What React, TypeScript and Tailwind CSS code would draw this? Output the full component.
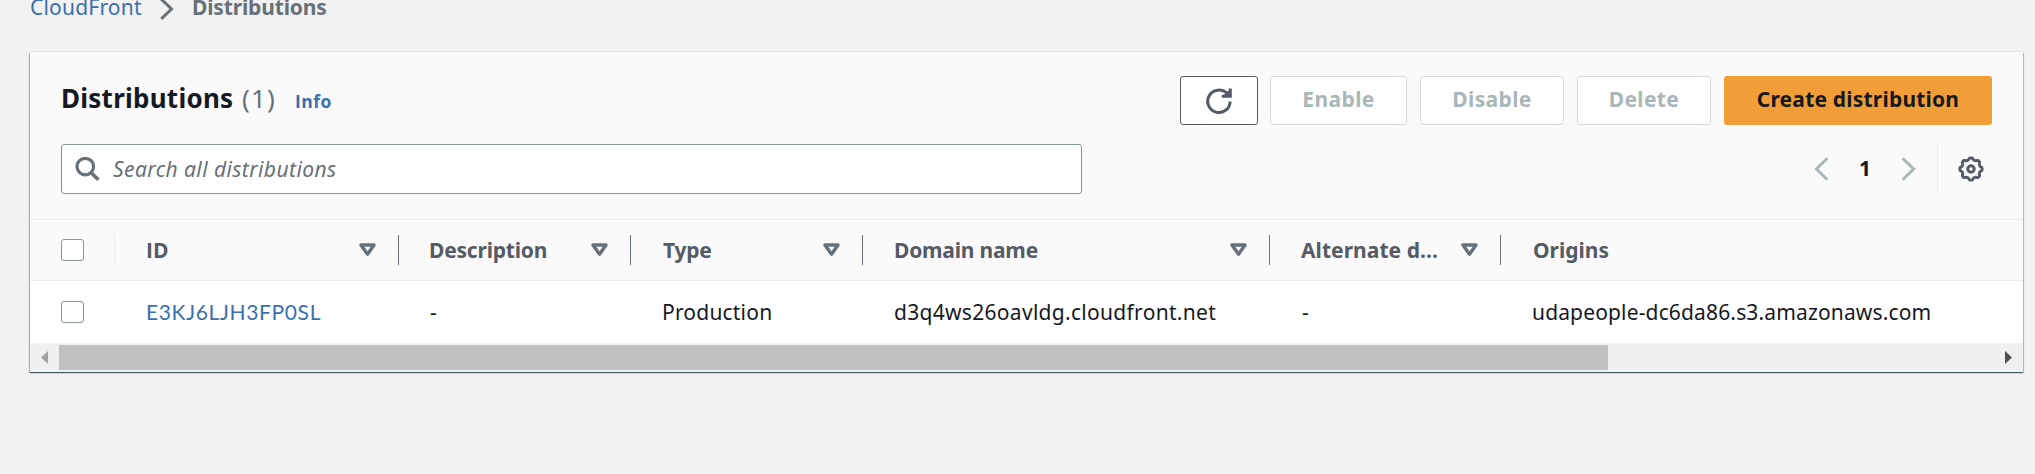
import type { ReactNode } from "react";

const gearPoints = Array.from({ length: 96 }, (_, i) => {
  const angle = (i / 96) * Math.PI * 2;
  const radius = 10.2 + 0.95 * Math.tanh(2 * Math.cos(angle * 8));
  return `${(13 + radius * Math.sin(angle)).toFixed(2)},${(13 - radius * Math.cos(angle)).toFixed(2)}`;
}).join(" ");

function SortIcon() {
  return (
    <svg width="17" height="14" viewBox="0 0 17 14" className="shrink-0">
      <path d="M2 2H15L8.5 11.2Z" fill="none" stroke="#687078" strokeWidth="3.4" strokeLinejoin="round" />
    </svg>
  );
}

function Checkbox() {
  return <span className="block h-[22px] w-[23px] rounded-[3px] border border-[#879596] bg-white" />;
}

function HeaderCell({ width, children }: { width: string; children: ReactNode }) {
  return (
    <div className={`flex h-[30px] shrink-0 items-center justify-between border-r border-[#687078] pr-[22px] ${width}`}>
      {children}
      <SortIcon />
    </div>
  );
}

function DisabledButton({ width, children }: { width: string; children: ReactNode }) {
  return (
    <button className={`flex h-[49px] items-center justify-center rounded-[3px] border border-[#d5dbdb] bg-white pb-[3px] text-[21px] font-bold text-[#aab7b8] ${width}`}>
      {children}
    </button>
  );
}

export default function App() {
  return (
    <div className="h-[474px] w-[2035px] overflow-hidden bg-[#f2f2f2] font-['Noto_Sans',sans-serif] text-[21px] leading-[30px] text-[#16191f]">
      <nav className="-mt-[8px] flex h-[60px] items-start pl-[30px]">
        <a className="w-[130px] tracking-[0.2px] text-[#3a6fb0]">CloudFront</a>
        <svg width="14" height="22" viewBox="0 0 14 22" className="mt-[6px] w-[14px] shrink-0">
          <path d="M1.3 1.2L11.5 11L1.3 20.8" fill="none" stroke="#687078" strokeWidth="3" />
        </svg>
        <span className="ml-[18px] font-bold tracking-[-0.15px] text-[#687078]">Distributions</span>
      </nav>

      <main className="ml-[30px] w-[1993px] bg-white shadow-[0_1px_1px_0_rgba(0,28,36,0.5),1px_1px_1px_0_rgba(0,28,36,0.2),-1px_1px_1px_0_rgba(0,28,36,0.25),0_-1px_0_0_#e6e8e8]">
        <section className="h-[167px] bg-[#fafafa] pt-[24px] pr-[31px] pl-[31px]">
          <div className="flex h-[49px] items-start">
            <h1 className="flex items-baseline pt-[7px]">
              <span className="w-[181px] text-[26px] font-bold tracking-[0.25px]">Distributions</span>
              <span className="w-[53px] text-[26px] tracking-[1.2px] text-[#687078]">(1)</span>
              <a className="font-['Open_Sans',sans-serif] text-[17.5px] font-bold tracking-[0.5px] text-[#3a6fb0]">Info</a>
            </h1>
            <div className="ml-auto flex">
              <button className="flex h-[49px] w-[78px] items-center justify-center rounded-[3px] border border-[#545b64] bg-white">
                <svg width="28" height="28" viewBox="0 0 28 28">
                  <path d="M25.1 14.4A11.2 11.2 0 1 1 22.2 6.8L24 8.8" fill="none" stroke="#545b64" strokeWidth="3" />
                  <path d="M25.3 1.5V9.2H16.8" fill="none" stroke="#545b64" strokeWidth="3" />
                  <path d="M20.5 5.2L25.5 3V9.5H19Z" fill="#545b64" />
                </svg>
              </button>
              <div className="ml-[12px]"><DisabledButton width="w-[137px] tracking-[0.4px]">Enable</DisabledButton></div>
              <div className="ml-[13px]"><DisabledButton width="w-[144px] tracking-[0.35px]">Disable</DisabledButton></div>
              <div className="ml-[13px]"><DisabledButton width="w-[134px] tracking-[0.35px]">Delete</DisabledButton></div>
              <button className="ml-[13px] flex h-[49px] w-[268px] items-center justify-center rounded-[3px] bg-[#f19e38] pb-[3px] text-[21px] font-bold tracking-[0.2px]">
                Create distribution
              </button>
            </div>
          </div>

          <div className="mt-[19px] flex h-[50px] items-start justify-between">
            <div className="flex h-[50px] w-[1021px] items-center rounded-[3px] border border-[#879596] bg-white pl-[13px]">
              <svg width="26" height="26" viewBox="0 0 26 26">
                <circle cx="10.3" cy="10.6" r="8.3" fill="none" stroke="#687078" strokeWidth="3.2" />
                <path d="M16 16.4L23.4 23.8" stroke="#687078" strokeWidth="3.6" />
              </svg>
              <span className="ml-[12px] tracking-[0.42px] text-[#687078] italic">Search all distributions</span>
            </div>
            <div className="flex h-[49px] items-center">
              <svg width="15" height="24" viewBox="0 0 15 24">
                <path d="M13.4 1.2L2.4 12L13.4 22.8" fill="none" stroke="#aab7b8" strokeWidth="3" />
              </svg>
              <span className="ml-[29px] w-[14px] pb-[2px] text-center font-bold">1</span>
              <svg width="15" height="24" viewBox="0 0 15 24" className="ml-[29px]">
                <path d="M1.6 1.2L12.6 12L1.6 22.8" fill="none" stroke="#aab7b8" strokeWidth="3" />
              </svg>
              <span className="ml-[21px] h-[49px] w-px bg-[#eaeded]" />
              <svg width="26" height="26" viewBox="0 0 26 26" className="mr-[8px] ml-[20px]">
                <polygon points={gearPoints} fill="none" stroke="#545b64" strokeWidth="2.9" strokeLinejoin="round" />
                <circle cx="13" cy="13" r="3.2" fill="none" stroke="#545b64" strokeWidth="3" />
              </svg>
            </div>
          </div>
        </section>

        <div className="flex h-[62px] items-center border-y border-[#eaeded] bg-[#fafafa] pl-[31px] font-bold text-[#545b64]">
          <div className="flex h-[30px] w-[54px] shrink-0 items-center border-r border-[#eaeded]"><Checkbox /></div>
          <HeaderCell width="w-[284px] pl-[31px] pb-px"><span className="font-['Open_Sans',sans-serif] font-bold">ID</span></HeaderCell>
          <HeaderCell width="w-[232px] pl-[30px] pb-px"><span className="tracking-[-0.2px]">Description</span></HeaderCell>
          <HeaderCell width="w-[232px] pl-[32px] pb-px"><span className="tracking-[-0.2px]">Type</span></HeaderCell>
          <HeaderCell width="w-[407px] pl-[31px] pb-px"><span className="tracking-[-0.2px]">Domain name</span></HeaderCell>
          <HeaderCell width="w-[231px] pl-[31px] pb-px"><span className="tracking-[0.05px]">Alternate d...</span></HeaderCell>
          <span className="pb-px pl-[32px]">Origins</span>
        </div>

        <div className="flex h-[62px] items-center pl-[31px]">
          <div className="w-[54px] shrink-0"><Checkbox /></div>
          <a className="w-[284px] shrink-0 pb-px pl-[31px] font-['Lato',sans-serif] tracking-[0.65px] text-[#3a6fb0]">E3KJ6LJH3FP0SL</a>
          <span className="w-[232px] shrink-0 pb-px pl-[31px]">-</span>
          <span className="w-[232px] shrink-0 pb-px pl-[31px] tracking-[0.2px]">Production</span>
          <span className="w-[407px] shrink-0 pb-px pl-[31px] tracking-[0.3px]">d3q4ws26oavldg.cloudfront.net</span>
          <span className="w-[231px] shrink-0 pb-px pl-[32px]">-</span>
          <span className="pb-px pl-[31px] tracking-[0.15px]">udapeople-dc6da86.s3.amazonaws.com</span>
        </div>

        <div className="flex h-[29px] items-center bg-[#f0f0f0]">
          <svg width="29" height="29" viewBox="0 0 29 29"><path d="M18 8V21L11 14.5Z" fill="#a3a3a3" /></svg>
          <span className="h-[25px] w-[1549px] bg-[#c1c1c1]" />
          <svg width="29" height="29" viewBox="0 0 29 29" className="ml-auto"><path d="M11 8V21L18 14.5Z" fill="#505050" /></svg>
        </div>
      </main>
    </div>
  );
}
